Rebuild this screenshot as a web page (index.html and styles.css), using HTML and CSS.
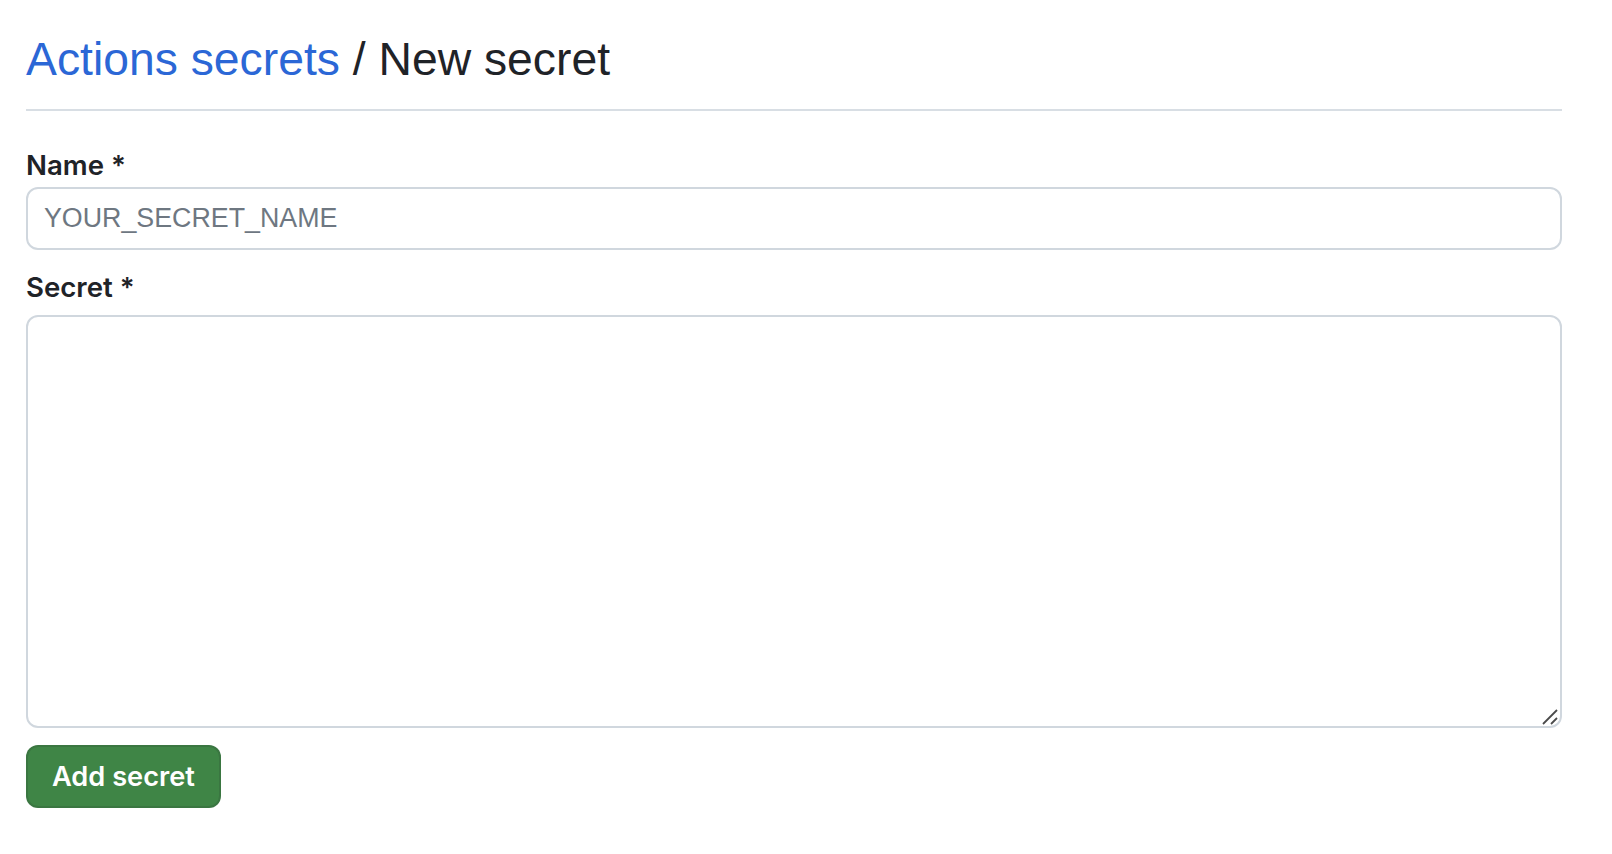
FILE: index.html
```html
<!DOCTYPE html>
<html>
<head>
    <meta charset="utf-8">
    <title>New secret</title>
    <link rel="stylesheet" href="styles.css">
</head>
<body>

<div class="subhead">
    <h1 class="subhead-heading"><a href="#">Actions secrets</a> / New secret</h1>
</div>

<form class="secret-form">
    <label class="form-label" for="secret_name">Name *</label>
    <input class="form-control name-input" id="secret_name" type="text" placeholder="YOUR_SECRET_NAME">

    <label class="form-label label-secret" for="secret_value">Secret *</label>
    <div class="textarea-wrap">
        <textarea class="form-control secret-input" id="secret_value"></textarea>
        <svg class="resize-grip" width="18" height="18" viewBox="0 0 18 18">
            <path d="M2 16 L16 2" stroke="#4a4a4a" stroke-width="1.8"/>
            <path d="M10 16 L16 10" stroke="#4a4a4a" stroke-width="1.8"/>
        </svg>
    </div>

    <button class="btn-primary" type="submit">Add secret</button>
</form>

</body>
</html>
```

FILE: styles.css
```css
* {
    box-sizing: border-box;
}

body {
    margin: 0;
    padding: 0 50px 0 26px;
    background-color: #ffffff;
    color: #1f2328;
    font-family: "Liberation Sans", Arial, sans-serif;
}

.subhead {
    padding-top: 31px;
    padding-bottom: 22px;
    border-bottom: 2px solid #d8dee4;
}

.subhead-heading {
    margin: 0;
    font-size: 46.3px;
    font-weight: 400;
    line-height: 56px;
    color: #1f2328;
}

.subhead-heading a {
    color: #2b67d6;
    text-decoration: none;
}

.secret-form {
    display: flex;
    flex-direction: column;
    align-items: flex-start;
    padding-top: 34px;
}

.form-label {
    display: block;
    font-family: Inter, "Liberation Sans", sans-serif;
    font-size: 27.6px;
    font-weight: 600;
    line-height: 40px;
    margin-bottom: 2px;
}

.label-secret {
    margin-top: 17px;
    margin-bottom: 8px;
}

.form-control {
    width: 100%;
    border: 2px solid #d0d7de;
    border-radius: 12px;
    background-color: #ffffff;
    color: #1f2328;
    font-family: "Liberation Sans", Arial, sans-serif;
    font-size: 26.8px;
    outline: none;
}

.form-control::placeholder {
    color: #6e7781;
}

.name-input {
    height: 63px;
    padding: 0 16px;
}

.textarea-wrap {
    position: relative;
    width: 100%;
}

.secret-input {
    display: block;
    height: 413px;
    padding: 16px;
    resize: none;
}

.resize-grip {
    position: absolute;
    right: 3px;
    bottom: 2px;
    pointer-events: none;
}

.btn-primary {
    margin-top: 17px;
    height: 63px;
    padding: 0 24px;
    border: 2px solid rgba(31, 35, 40, 0.15);
    border-radius: 12px;
    background-color: #3f8546;
    color: #ffffff;
    font-family: Inter, "Liberation Sans", sans-serif;
    font-size: 27.2px;
    font-weight: 600;
    cursor: pointer;
}
```
